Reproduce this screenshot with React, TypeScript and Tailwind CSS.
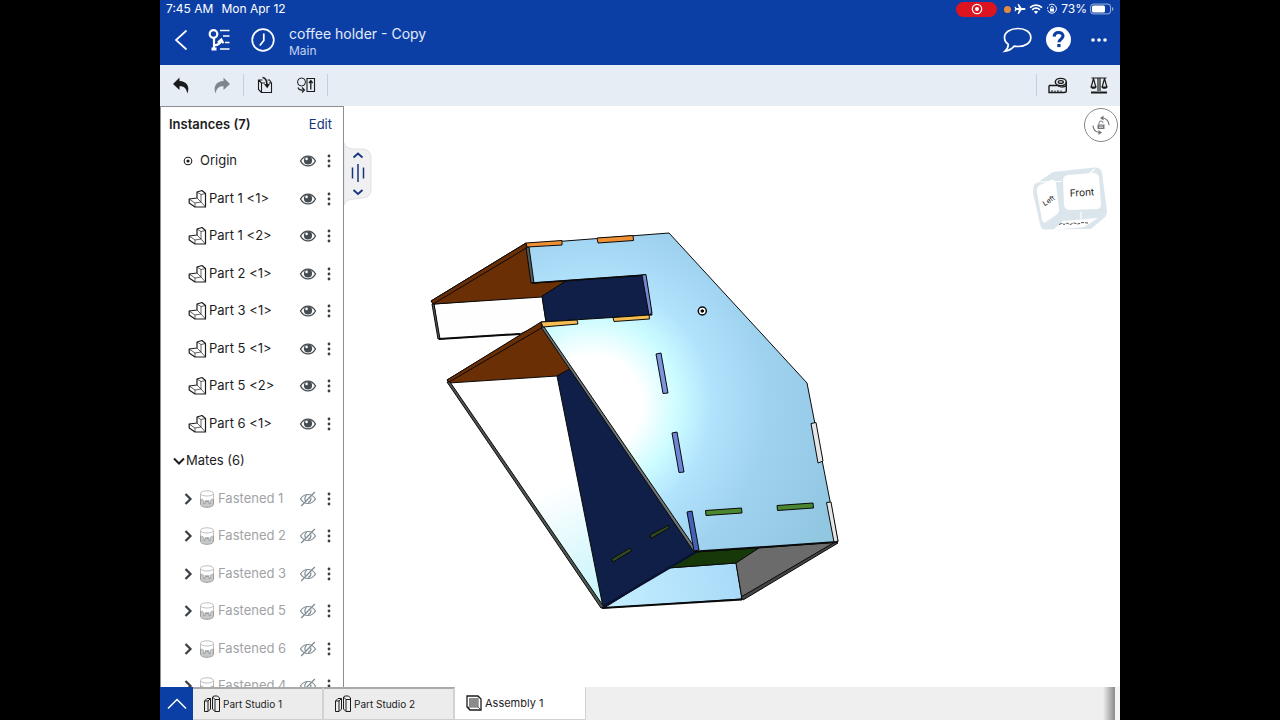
import { ReactNode } from "react";
import { clsx } from "clsx";

const PARTS = [
  "Part 1 <1>",
  "Part 1 <2>",
  "Part 2 <1>",
  "Part 3 <1>",
  "Part 5 <1>",
  "Part 5 <2>",
  "Part 6 <1>",
];

const MATES = ["Fastened 1", "Fastened 2", "Fastened 3", "Fastened 5", "Fastened 6", "Fastened 4"];

interface IconProps {
  children: ReactNode;
  box?: string;
  className?: string;
}

function Icon({ children, box = "0 0 24 24", className }: IconProps) {
  return (
    <svg
      viewBox={box}
      fill="none"
      stroke="currentColor"
      strokeWidth="1.5"
      className={clsx("shrink-0", className)}
      aria-hidden="true"
    >
      {children}
    </svg>
  );
}

function IconButton({ label, className, children }: { label: string; className?: string; children: ReactNode }) {
  return (
    <button type="button" aria-label={label} className={clsx("flex shrink-0 items-center justify-center", className)}>
      {children}
    </button>
  );
}

/* ── Status bar + title bar ── */
function StatusBar() {
  return (
    <div className="flex h-[18px] items-center justify-between px-[6px] text-xs">
      <div className="flex gap-2">
        <span>7:45 AM</span>
        <span>Mon Apr 12</span>
      </div>
      <div className="flex items-center gap-[3px]">
        <span className="mr-1 flex h-[15px] w-[41px] items-center justify-center rounded-full bg-[#dc1420]">
          <Icon box="0 0 12 12" className="size-3">
            <circle cx="6" cy="6" r="4.7" strokeWidth="1.2" />
            <circle cx="6" cy="6" r="2" fill="currentColor" stroke="none" />
          </Icon>
        </span>
        <span className="size-[7px] rounded-full bg-[#e58a3a]" />
        <Icon box="0 0 12 12" className="size-3">
          <path
            d="M11.5 6c0-.6-.6-.9-1.3-.9H7.6L4.8 1H3.6l1.3 4.1H2.4L1.3 3.8H.5L1.2 6 .5 8.2h.8l1.1-1.3h2.5L3.6 11h1.2l2.8-4.1h2.6c.7 0 1.3-.3 1.3-.9z"
            fill="currentColor"
            stroke="none"
          />
        </Icon>
        <Icon box="0 0 14 12" className="h-3 w-[14px]">
          <path d="M1 4.6a8.6 8.6 0 0 1 12 0M3.1 6.8a5.6 5.6 0 0 1 7.8 0" strokeWidth="1.7" />
          <path d="M7 11 4.9 8.8a3 3 0 0 1 4.2 0z" fill="currentColor" stroke="none" />
        </Icon>
        <Icon box="0 0 12 12" className="size-3">
          <path d="M3 2.3A4.5 4.5 0 1 1 1.7 7.3M1.5 5.8A4.5 4.5 0 0 1 2 3.8" strokeWidth="1" />
          <path d="M4 5.6h4v3H4z" fill="currentColor" stroke="none" />
          <path d="M4.8 5.6v-1a1.2 1.2 0 0 1 2.4 0v1" strokeWidth=".9" />
        </Icon>
        <span>73%</span>
        <Icon box="0 0 24 12" className="h-3 w-6">
          <rect x=".6" y="1.1" width="20" height="9.8" rx="2.8" strokeWidth="1" opacity=".6" />
          <rect x="2" y="2.5" width="13" height="7" rx="1.5" fill="currentColor" stroke="none" />
          <path d="M22.6 4.6v2.8" strokeWidth="1.2" opacity=".6" />
        </Icon>
      </div>
    </div>
  );
}

function TitleBar() {
  return (
    <div className="flex h-[47px] items-center pb-1 pl-[10px] pr-[9px]">
      <IconButton label="Back" className="h-8 w-6">
        <Icon className="size-6">
          <path d="M16.5 2.5 6 12l10.5 9.5" strokeWidth="1.7" />
        </Icon>
      </IconButton>
      <IconButton label="Versions" className="ml-[11px] size-7">
        <Icon box="0 0 28 28" className="size-7">
          <circle cx="8.5" cy="8" r="3.8" strokeWidth="2.2" />
          <path d="M9 12v12M9 19.500c4-.5 6.500-2 7-5M12.800 16.500l3.500-3 2 3.800" strokeWidth="2.2" />
          <path d="M15 4.500h9.500M18 10h6.500M20 16.500h4.500M15 23h9.500" strokeWidth="1.3" />
          <path d="M6.500 21.500h5v3h-5z" fill="currentColor" stroke="none" />
        </Icon>
      </IconButton>
      <IconButton label="History" className="ml-[17px] size-[26px]">
        <Icon box="0 0 26 26" className="size-[26px]">
          <circle cx="13" cy="13" r="10.8" strokeWidth="1.7" />
          <path d="M13.8 6.5v7l-4 5" strokeWidth="1.7" />
        </Icon>
      </IconButton>
      <div className="ml-[13px] flex-1 pt-1">
        <h1 className="text-[14px] leading-[18px] text-[#e4ecfa]">coffee holder - Copy</h1>
        <p className="text-[12px] leading-4 text-[#c3d2f0]">Main</p>
      </div>
      <IconButton label="Comments" className="size-[30px]">
        <Icon box="0 0 30 30" className="size-[30px]">
          <path
            d="M16 3.500c7.500 0 12.800 3.800 12.800 9S23.500 21.500 16 21.500c-1.300 0-2.600-.1-3.800-.4-2.200 2.400-5.400 4.600-9.200 5.100 1.900-1.700 3.200-4.200 3.300-6.800C4 17.700 2.500 15.300 2.500 12.500 2.500 7.300 8.500 3.500 16 3.500z"
            strokeWidth="1.7"
          />
        </Icon>
      </IconButton>
      <button
        type="button"
        aria-label="Help"
        className="ml-[14px] flex size-[25px] items-center justify-center rounded-full bg-white text-[#0c3fa6]"
      >
        <Icon className="size-[25px]">
          <path d="M7.8 9.2c.2-2.500 1.900-3.900 4.300-3.900 2.500 0 4.200 1.400 4.200 3.400 0 3-3.900 2.900-3.900 6" strokeWidth="3" />
          <path d="M10.8 16.300h3.200v3h-3.200z" fill="currentColor" stroke="none" />
        </Icon>
      </button>
      <IconButton label="More" className="ml-4 size-6">
        <Icon className="size-6">
          <path d="M6 12h.01M12 12h.01M18 12h.01" strokeWidth="3.6" strokeLinecap="round" />
        </Icon>
      </IconButton>
    </div>
  );
}

/* ── Toolbar ── */
function Divider() {
  return <span className="h-[22px] w-px bg-[#c4cfdc]" />;
}

function Toolbar() {
  return (
    <div className="flex h-[41px] items-center bg-[#e6edf4] px-[9px] pb-[2px] text-[#1b1b1b]">
      <IconButton label="Undo" className="size-6">
        <Icon className="size-6">
          <path d="M10.500 4.500 4 11l6.500 6v-3.800c4.300 0 6.900 1.700 7.900 7.300C21.200 14 18 8.300 10.500 8z" fill="currentColor" stroke="none" />
        </Icon>
      </IconButton>
      <IconButton label="Redo" className="ml-[17px] size-6 text-[#7f868e]">
        <Icon className="size-6">
          <path d="M13.500 4.500 20 11l-6.500 6v-3.800c-4.300 0-6.900 1.700-7.900 7.300C2.800 14 6 8.300 13.500 8z" fill="currentColor" stroke="none" />
        </Icon>
      </IconButton>
      <span className="ml-[9px] flex">
        <Divider />
      </span>
      <IconButton label="Insert part" className="ml-[9px] size-6">
        <Icon className="size-6">
          <path d="M9.500 7H5.500v9.500L8.500 19.500M8.500 10H12M16 10h2.500v9.500h-10V10M5.500 7l3 3M14.500 7h2l2 3" strokeWidth="1.1" />
          <path d="M9.500 4.500c3.500.3 4.500 3 4.500 8" strokeWidth="1.6" />
          <path d="M11 11.300l3.300 4 2.700-4.600z" fill="currentColor" stroke="none" />
        </Icon>
      </IconButton>
      <IconButton label="Mate" className="ml-[17px] size-6">
        <Icon className="size-6">
          <circle cx="7.500" cy="9" r="4" strokeWidth="1" />
          <path d="M13 5.500h7.500v13H13zM4 14.500c.5 2 2 3 5.500 2.500M8 14.500l2.500 2.500L8 19.500" strokeWidth="1.1" />
          <path d="M16.800 16.500V8M15 10l1.800-2.500L18.600 10" strokeWidth="1.3" />
        </Icon>
      </IconButton>
      <span className="ml-[9px] flex flex-1">
        <Divider />
      </span>
      <Divider />
      <IconButton label="Measure" className="ml-[9px] size-6">
        <Icon className="size-6">
          <path d="M3 12.500h8M20.300 9v9c0 1-1 1.500-2.500 1.500H3v-7" strokeWidth="1.4" />
          <ellipse cx="14.800" cy="9" rx="5.500" ry="3.600" strokeWidth="1.4" />
          <ellipse cx="14.800" cy="9" rx="2.600" ry="1.400" strokeWidth="1.2" />
          <path d="M10.500 11.500c2 3 7 3.500 9.800 1" strokeWidth="1.1" />
          <path d="M6 19v-2M9 19v-1.500M12 19v-2M15 19v-1.500" strokeWidth="1" />
        </Icon>
      </IconButton>
      <IconButton label="Mass properties" className="ml-[17px] size-6">
        <Icon className="size-6">
          <path d="M4.500 5h15M11 5v13M13 5v13M6.500 5.500 4.200 14M6.500 5.500 8.800 14M17.500 5.500 15.200 14M17.500 5.500l2.300 8.500" strokeWidth="1.2" />
          <path d="M3.200 13.500h6.600c-.4 1.700-1.600 2.300-3.300 2.300s-2.900-.6-3.300-2.300zM14.200 13.500h6.600c-.4 1.700-1.600 2.300-3.300 2.300s-2.900-.6-3.300-2.300zM4 18.500h16v2H4z" fill="currentColor" stroke="none" />
        </Icon>
      </IconButton>
    </div>
  );
}

/* ── Instance tree ── */
function EyeIcon() {
  return (
    <Icon box="0 0 18 14" className="h-[14px] w-[18px]">
      <path d="M1.500 7C3.500 3.500 6 2.100 9 2.100s5.500 1.400 7.500 4.900c-2 3.500-4.500 4.900-7.500 4.900S3.500 10.500 1.500 7z" strokeWidth="1.4" />
      <circle cx="9" cy="6.500" r="4.1" fill="currentColor" stroke="none" />
      <circle cx="7.600" cy="4.900" r="1.3" fill="white" stroke="none" />
    </Icon>
  );
}

function EyeOffIcon() {
  return (
    <Icon box="0 0 18 16" className="h-4 w-[18px]">
      <path
        d="M1.500 8C3.500 4.800 6 3.500 9 3.500s5.500 1.300 7.500 4.500c-2 3.200-4.500 4.500-7.500 4.500S3.500 11.200 1.500 8zM8 4.500C5.800 5 5.300 8 6.500 10M11.800 6.500c.3 2.500-.6 4.400-2.800 4.800"
        strokeWidth="1.2"
      />
      <path d="M15.800 1 2.200 15" strokeWidth="1.3" />
    </Icon>
  );
}

function DotsIcon() {
  return (
    <Icon box="0 0 6 16" className="h-4 w-[6px]">
      <path d="M3 3h.01M3 8h.01M3 13h.01" strokeWidth="2.8" strokeLinecap="round" />
    </Icon>
  );
}

function PartIcon() {
  return (
    <Icon box="0 0 20 20" className="size-5">
      <path d="M9 3 14 1.500l3.500 3V18H7L1.200 14v-4L9 9z" strokeWidth="1.2" strokeLinejoin="round" />
      <path d="M9 3l4 2.500 4.500-1M13 5.500V13M1.200 10 7 14v4M7 14l6-1M9 9l4 4M13 13l4.500 5" strokeWidth=".7" />
    </Icon>
  );
}

function MateIcon() {
  return (
    <Icon box="0 0 16 20" className="h-5 w-4">
      <path
        d="M1.500 9v6c0 2.200 3 3.300 6.500 3.300s6.500-1.100 6.500-3.300V9l-3 1.500v4.200H10v-2.200H6v2.200H4.500v-4.200z"
        fill="#c6c8ca"
        stroke="#9a9da0"
        strokeWidth="1"
      />
      <path d="M1.500 4.500v5.200L4.500 11v2.500H6V11.500h4v2h1.500V11l3-1.300V4.500" fill="white" stroke="#b5b8ba" strokeWidth=".9" />
      <ellipse cx="8" cy="4.400" rx="6.500" ry="2.600" fill="white" stroke="#b5b8ba" strokeWidth=".9" />
    </Icon>
  );
}

function RowActions({ name, hidden }: { name: string; hidden?: boolean }) {
  return (
    <>
      <IconButton
        label={hidden ? `Show ${name}` : `Hide ${name}`}
        className={clsx("ml-auto w-5", hidden ? "text-[#7f8c93]" : "text-[#454c52]")}
      >
        {hidden ? <EyeOffIcon /> : <EyeIcon />}
      </IconButton>
      <IconButton label={`${name} menu`} className="ml-2 w-[6px] text-[#3a3f44]">
        <DotsIcon />
      </IconButton>
    </>
  );
}

function Row({ children, className }: { children: ReactNode; className?: string }) {
  return (
    <li className={clsx("flex h-[37px] shrink-0 items-center pr-[11px] odd:h-[38px]", className)}>{children}</li>
  );
}

function InstancePanel() {
  return (
    <aside className="flex w-[184px] shrink-0 flex-col overflow-hidden border border-b-0 border-[#8b8f93] bg-white text-[13px] text-[#1c1c1e]">
      <div className="flex h-[35px] shrink-0 items-center justify-between pl-2 pr-[11px]">
        <h2 className="font-semibold">Instances (7)</h2>
        <button type="button" className="text-[#14347c]">Edit</button>
      </div>
      <ul className="flex min-h-0 flex-1 flex-col">
        <Row className="pl-[22px]">
          <Icon box="0 0 10 10" className="mr-[7px] size-[10px]">
            <circle cx="5" cy="5" r="3.8" strokeWidth="1.1" />
            <circle cx="5" cy="5" r="1.6" fill="currentColor" stroke="none" />
          </Icon>
          Origin
          <RowActions name="Origin" />
        </Row>
        {PARTS.map((name) => (
          <Row key={name} className="pl-[27px]">
            <PartIcon />
            <span className="ml-px">{name}</span>
            <RowActions name={name} />
          </Row>
        ))}
        <Row className="pl-3">
          <button type="button" className="flex items-center">
            <Icon box="0 0 12 12" className="mr-px size-3">
              <path d="M1 3.500 6 8.500l5-5" strokeWidth="2" />
            </Icon>
            Mates (6)
          </button>
        </Row>
        {MATES.map((name) => (
          <Row key={name} className="pl-[21px] text-[#a0a3a6]">
            <IconButton label={`Expand ${name}`} className="mr-[5px] w-3 text-[#3a3f44]">
              <Icon box="0 0 12 12" className="size-3">
                <path d="M3.500 1 8.500 6l-5 5" strokeWidth="2.2" />
              </Icon>
            </IconButton>
            <MateIcon />
            <span className="ml-[3px]">{name}</span>
            <RowActions name={name} hidden />
          </Row>
        ))}
      </ul>
    </aside>
  );
}

/* ── 3D viewport ── */
function Model() {
  return (
    <svg viewBox="344 106 776 581" className="h-full w-full" role="img" aria-label="Coffee holder assembly">
      <defs>
        <radialGradient id="face" gradientUnits="userSpaceOnUse" cx="592" cy="404" r="260">
          <stop offset="0" stopColor="#ffffff" />
          <stop offset=".19" stopColor="#ffffff" />
          <stop offset=".33" stopColor="#ccfcff" />
          <stop offset=".46" stopColor="#b2e3fd" />
          <stop offset=".68" stopColor="#9fd2ef" />
          <stop offset="1" stopColor="#92c7e2" />
        </radialGradient>
        <linearGradient id="inner" gradientUnits="userSpaceOnUse" x1="550" y1="490" x2="605" y2="600">
          <stop offset="0" stopColor="#ffffff" />
          <stop offset="1" stopColor="#c4f4fb" />
        </linearGradient>
        <linearGradient id="floor" gradientUnits="userSpaceOnUse" x1="620" y1="600" x2="740" y2="580">
          <stop offset="0" stopColor="#c2ecff" />
          <stop offset="1" stopColor="#a8daf8" />
        </linearGradient>
      </defs>
      <g stroke="#0a0a0a" strokeWidth="1" strokeLinejoin="round">
        {/* upper arm */}
        <path d="M434 304 542 296 546 322 520 334 439 339z" fill="#fefefe" />
        <path d="M431 301 526 243 533 283 566 281 542 297 434 304z" fill="#6b2f05" />
        <path d="M431 301 526 243 528 247 433 304z" fill="#6b2f05" />
        <path d="M432 304 434 304 440 339 438 339z" fill="#555b58" />
        <path d="M439 339 520 334" strokeWidth="2" />
        <path d="M542 296 566 281 645 275 652 315 546 322z" fill="#0f1f48" />
        {/* underside */}
        <path d="M668 568 736 563 742 599 604 608z" fill="url(#floor)" />
        <path d="M690 552 759 548 736 563 668 568z" fill="#17390a" />
        <path d="M736 563 759 548 837 542 742 599z" fill="#6b6b6b" />
        <path d="M741 597 836 541.5 838 543 743 600z" fill="#444444" />
        <path d="M602 608 742 599.5" strokeWidth="1.8" />
        {/* lower tray */}
        <path d="M449 382 557 376 603 606z" fill="url(#inner)" stroke="none" />
        <path d="M447 380 541 323 573 368 557 376 449 383z" fill="#6b2f05" />
        <path d="M447 380 541 322 543 327 449 382z" fill="#6b2f05" />
        <path d="M557 376 568 370 574 368 696 552 603 607z" fill="#0f1f48" />
        <path d="M447 382 450 382 604 607 601 608z" fill="#4e5652" />
        <path d="M603 607 696 552" strokeWidth="2.5" stroke="#0a1230" />
        <path d="M611.5 559 630 548 631.5 551 613 562z" fill="#2f4a20" />
        <path d="M650 535 669 525 669 528 651 538.5z" fill="#2f4a20" />
        {/* front face */}
        <path
          d="M526 244 669 233 807 383 838 542 696 552 542 327 541 322 652 315 645 275 532 283z"
          fill="url(#face)"
        />
        <path d="M526 247 529 247 534 283 531 283z" fill="#555b58" />
        <path d="M532 283 645 275" strokeWidth="1.6" />
        <path d="M541 327 544 327 697 551 694 552z" fill="#6d7474" />
        <path d="M696 551.5 837 542" strokeWidth="1.8" />
        <path d="M526 243 562 240.5 562 245 527 247z" fill="#f09034" />
        <path d="M597 238 633 235.5 633.5 240.5 598 243z" fill="#f09034" />
        <path d="M541 322 577 320 578 324 543 327z" fill="#f6bd52" />
        <path d="M613 317.5 649 315 649.5 319 614 321.5z" fill="#f6bd52" />
        <path d="M642 275 646 274.5 652 313 649 315z" fill="#7487d2" />
        <path d="M656 354 661 353 668 393 663 393.5z" fill="#7c93dd" />
        <path d="M672 433 677 432 684 472 679 472.5z" fill="#6e86d8" />
        <path d="M687 512 692 511 699 550 694 551z" fill="#4560b8" />
        <path d="M705.5 510.5 741.5 508 742 513 706 515.5z" fill="#4b8630" />
        <path d="M777 505.5 813 503 813.5 508 777.5 510.5z" fill="#4b8630" />
        <path d="M811 423.5 816 422.5 823 461 818 463z" fill="#e4e6e8" />
        <path d="M826.5 502.5 831 502 838 541 834 542z" fill="#e4e6e8" />
        <circle cx="702.3" cy="311" r="4" fill="#ffffff" strokeWidth="1.5" />
        <circle cx="702.3" cy="311" r="1.3" />
      </g>
    </svg>
  );
}

function ViewCube() {
  return (
    <svg viewBox="0 0 76 68" className="h-[68px] w-[76px]" role="img" aria-label="View cube">
      <path d="M3 19 21 7 62 2.5Q69 2 70 8L75 46Q75 51 72 53L59 64 12 64.5Q9 64 8 59L1 28Q1 21 3 19z" fill="#dbe6ec" />
      <path d="M3 17 30 16.5M57 9 63 4M49 47v7" stroke="#ffffff" strokeWidth="1.2" />
      <path d="M8 20 19 15Q23 14 24 19L27 44Q27 48 24 50L14 57Q11 59 10 55L5 27Q4 22 8 20z" fill="#ffffff" />
      <path d="M36 10 61 8Q66 8 67 12L69 39Q69 44 65 44L38 45Q33 45 32 40L31 15Q31 11 36 10z" fill="#ffffff" />
      <path d="M31 56 66 53 52 62 21 65z" fill="#ffffff" />
      <path d="M27 59.5l3-1.2 2 1.2 3-1.5 3 1.5 4-1.5 4 1 4-1.5 6 .5" fill="none" stroke="#4d5154" strokeWidth="1" strokeDasharray="3 1" />
      <g fill="#222222" fontFamily="Inter, sans-serif" textAnchor="middle">
        <text x="50" y="31" fontSize="10" transform="rotate(-3 50 28)">Front</text>
        <text x="17" y="38" fontSize="7" transform="rotate(-34 17 36)">Left</text>
      </g>
    </svg>
  );
}

function Viewport() {
  return (
    <main className="relative min-w-0 flex-1 bg-white">
      <Model />
      <button
        type="button"
        aria-label="Resize panel"
        className="absolute left-0 top-[37px] flex text-[#14347c]"
      >
        <svg viewBox="0 0 28 62" className="h-[62px] w-7" fill="none" aria-hidden="true">
          <path d="M0 0Q2 6 10 6H19Q27 7 27 15V46Q27 54 19 55L10 56Q2 56 0 62z" fill="#f0f0f2" stroke="#e0e1e4" strokeWidth="1" />
          <path d="M9.500 14.500 14 10.500l4.500 4M9.500 47l4.500 4 4.500-4" stroke="currentColor" strokeWidth="1.8" />
          <path d="M8.500 24.500v11M14 21v18M19.500 24.500v11" stroke="currentColor" strokeWidth="1.5" />
        </svg>
      </button>
      <button
        type="button"
        aria-label="Lock rotation"
        className="absolute right-[2px] top-[2px] flex size-[34px] items-center justify-center rounded-full border border-[#85898d] bg-white text-[#74787c]"
      >
        <Icon className="size-6">
          <path d="M14 5a7.500 7.500 0 0 1 6 7M4 12.500a7.500 7.500 0 0 0 6 7" strokeWidth="1.2" />
          <path d="M14.500 2.500v5l-3.500-2.500zM9.500 17v5l3.500-2.500zM8.500 11.500h7v4.500h-7z" fill="currentColor" stroke="none" />
          <path d="M10 11.500v-1.500a2 2 0 0 1 4 0" strokeWidth="1" />
          <path d="M10 13h4M10 14.500h4" stroke="white" strokeWidth=".6" />
        </Icon>
      </button>
      <div className="absolute right-3 top-[59px]">
        <ViewCube />
      </div>
    </main>
  );
}

/* ── Document tabs ── */
function StudioIcon() {
  return (
    <Icon box="0 0 18 18" className="size-[18px]">
      <path d="M1.500 6 4 3.500h3.500v10.500L5 16.500H1.500zM1.500 6H5v10.500M5 6l2.500-2.500" strokeWidth="1" />
      <path d="M9.500 2 11 1h3.500L16.500 3v13.500h-4.500L9.500 14zM9.500 2l2.500 2.500h4.500M12 4.500v12" strokeWidth="1" />
    </Icon>
  );
}

function DocumentTabs() {
  return (
    <nav className="flex h-[33px] shrink-0 bg-[#efefef] text-[10px] text-[#1c1c1e]">
      <IconButton label="Show all tabs" className="w-[33px] bg-[#0c3fa6] text-white">
        <Icon box="0 0 20 20" className="size-5">
          <path d="M1 14.500 10 5.500l9 9" strokeWidth="1.5" />
        </Icon>
      </IconButton>
      {["Part Studio 1", "Part Studio 2"].map((tab) => (
        <button
          key={tab}
          type="button"
          className="flex w-[131px] items-center gap-[2px] border-b border-r-2 border-t-2 border-b-[#cfcfcf] border-r-[#d2d2d2] border-t-[#a9a9a9] bg-[#ececec] pl-[10px]"
        >
          <StudioIcon />
          {tab}
        </button>
      ))}
      <button
        type="button"
        aria-current="page"
        className="flex w-[131px] items-center gap-[3px] border-b border-r border-[#d2d2d2] bg-white pl-[11px] text-[11px]"
      >
        <Icon box="0 0 16 16" className="size-4">
          <path d="M1 1h11l3 3v11H4l-3-3z" strokeWidth="1.3" />
          <path d="M3 3h8.500v8.500H3z" fill="#8b8b8b" stroke="none" />
          <path d="M4 14.500 2 12h10V2.500M12 12l2.500 2.500" strokeWidth=".7" />
        </Icon>
        Assembly 1
      </button>
      <span className="ml-auto w-3 bg-gradient-to-r from-[#efefef] to-[#8a8a8a]" />
      <span className="w-[5px] bg-[#f4f4f4]" />
    </nav>
  );
}

export default function App() {
  return (
    <div className="min-h-screen bg-black font-['Inter',sans-serif]">
      <div className="mx-auto flex h-screen w-3/4 flex-col overflow-hidden bg-white">
        <header className="shrink-0">
          <div className="bg-[#0c3fa6] text-white">
            <StatusBar />
            <TitleBar />
          </div>
          <Toolbar />
        </header>
        <div className="flex min-h-0 flex-1">
          <InstancePanel />
          <Viewport />
        </div>
        <DocumentTabs />
      </div>
    </div>
  );
}
